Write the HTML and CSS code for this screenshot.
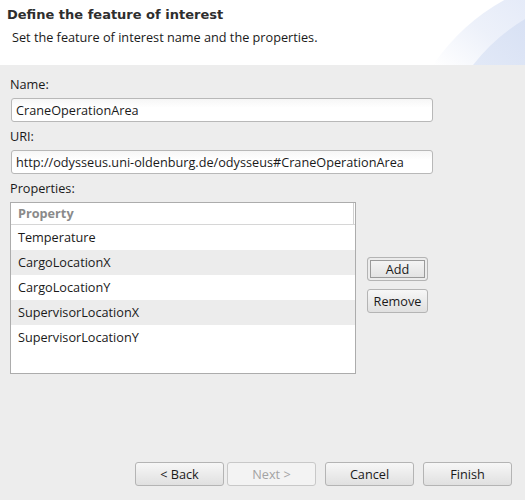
FILE: index.html
```html
<!DOCTYPE html>
<html>
<head>
<meta charset="utf-8">
<link rel="stylesheet" href="styles.css">
</head>
<body>
<div class="dialog">
  <div class="header">
    <div class="title">Define the feature of interest</div>
    <div class="subtitle">Set the feature of interest name and the properties.</div>
    <svg class="banner" width="125" height="65" viewBox="0 0 125 65">
      <defs>
        <linearGradient id="outer" x1="0" y1="1" x2="1" y2="0">
          <stop offset="0" stop-color="#ffffff"/>
          <stop offset="0.5" stop-color="#edf1fa"/>
          <stop offset="1" stop-color="#e4eaf8"/>
        </linearGradient>
        <linearGradient id="inner" x1="0" y1="1" x2="1" y2="0">
          <stop offset="0" stop-color="#e2e9f7"/>
          <stop offset="1" stop-color="#d8e1f4"/>
        </linearGradient>
      </defs>
      <path d="M33 65 A211 211 0 0 1 125 -10 L125 65 Z" fill="url(#outer)"/>
      <path d="M73 65 A186 186 0 0 1 125 19 L125 65 Z" fill="url(#inner)"/>
    </svg>
  </div>
  <div class="content">
    <div class="label">Name:</div>
    <div class="input">CraneOperationArea</div>
    <div class="label">URI:</div>
    <div class="input">http://odysseus.uni-oldenburg.de/odysseus#CraneOperationArea</div>
    <div class="label">Properties:</div>
    <div class="props">
      <div class="table">
        <div class="thead"><span class="th">Property</span></div>
        <div class="row">Temperature</div>
        <div class="row alt">CargoLocationX</div>
        <div class="row">CargoLocationY</div>
        <div class="row alt">SupervisorLocationX</div>
        <div class="row">SupervisorLocationY</div>
      </div>
      <div class="side">
        <button class="btn focus">Add</button>
        <button class="btn">Remove</button>
      </div>
    </div>
  </div>
  <div class="footer">
    <button class="btn wide">&lt; Back</button>
    <button class="btn wide disabled">Next &gt;</button>
    <button class="btn wide gap">Cancel</button>
    <button class="btn wide">Finish</button>
  </div>
</div>
</body>
</html>
```
FILE: styles.css
```css
html, body {
  margin: 0;
  padding: 0;
}
body {
  width: 525px;
  height: 500px;
  background: #ededed;
  font-family: "Open Sans", "DejaVu Sans", sans-serif;
  font-size: 12.7px;
  color: #1a1a1a;
  overflow: hidden;
}
.dialog {
  display: flex;
  flex-direction: column;
  height: 500px;
}
.header {
  position: relative;
  height: 65px;
  box-sizing: border-box;
  padding: 6px 0 0 7px;
  background: #ffffff;
}
.banner {
  position: absolute;
  right: 0;
  top: 0;
  display: block;
}
.title {
  position: relative;
  z-index: 1;
  font-family: "DejaVu Sans", sans-serif;
  font-weight: bold;
  font-size: 13px;
  line-height: 18px;
  color: #2e2e2e;
}
.subtitle {
  position: relative;
  z-index: 1;
  margin: 4px 0 0 5px;
  line-height: 18px;
  color: #1a1a1a;
}
.content {
  padding: 10px 92px 0 10px;
}
.label {
  line-height: 18px;
  margin-bottom: 5px;
}
.input {
  margin: 0 0 5px 1px;
  height: 24px;
  box-sizing: border-box;
  border: 1px solid #b8b8b8;
  border-radius: 3px;
  background: linear-gradient(#f6f6f6, #ffffff 40%);
  padding: 0 0 0 4px;
  line-height: 22px;
}
.props {
  display: flex;
  align-items: flex-start;
}
.table {
  width: 346px;
  height: 172px;
  box-sizing: border-box;
  border: 1px solid #acacac;
  background: #ffffff;
}
.thead {
  height: 21px;
  border-bottom: 1px solid #d6d6d6;
  display: flex;
}
.th {
  flex: 1;
  border-right: 1px solid #d0d0d0;
  margin-right: 1px;
  padding-left: 7px;
  line-height: 20px;
  font-weight: bold;
  color: #8a8a8a;
}
.row {
  height: 25px;
  line-height: 24px;
  padding-left: 7px;
}
.row.alt {
  background: #ececec;
}
.side {
  display: flex;
  flex-direction: column;
  gap: 8px;
  margin: 55px 0 0 11px;
}
.btn {
  font-family: "Open Sans", "DejaVu Sans", sans-serif;
  font-size: 12.7px;
  color: #1a1a1a;
  width: 61px;
  height: 24px;
  padding: 0;
  box-sizing: border-box;
  border: 1px solid #b4b4b4;
  border-radius: 3px;
  background: linear-gradient(#f7f7f7, #e0e0e0);
  line-height: 20px;
}
.btn.focus {
  box-shadow: inset 0 0 0 2px #ececec, inset 0 0 0 3px #9a9a9a;
}
.footer {
  margin-top: auto;
  display: flex;
  padding: 0 13px 14px 135px;
  gap: 3px;
}
.btn.wide {
  width: 89px;
}
.btn.gap {
  margin-left: 6px;
  margin-right: 6px;
}
.btn.disabled {
  color: #a3a3a3;
  background: #f3f3f3;
  border-color: #c8c8c8;
}
```
